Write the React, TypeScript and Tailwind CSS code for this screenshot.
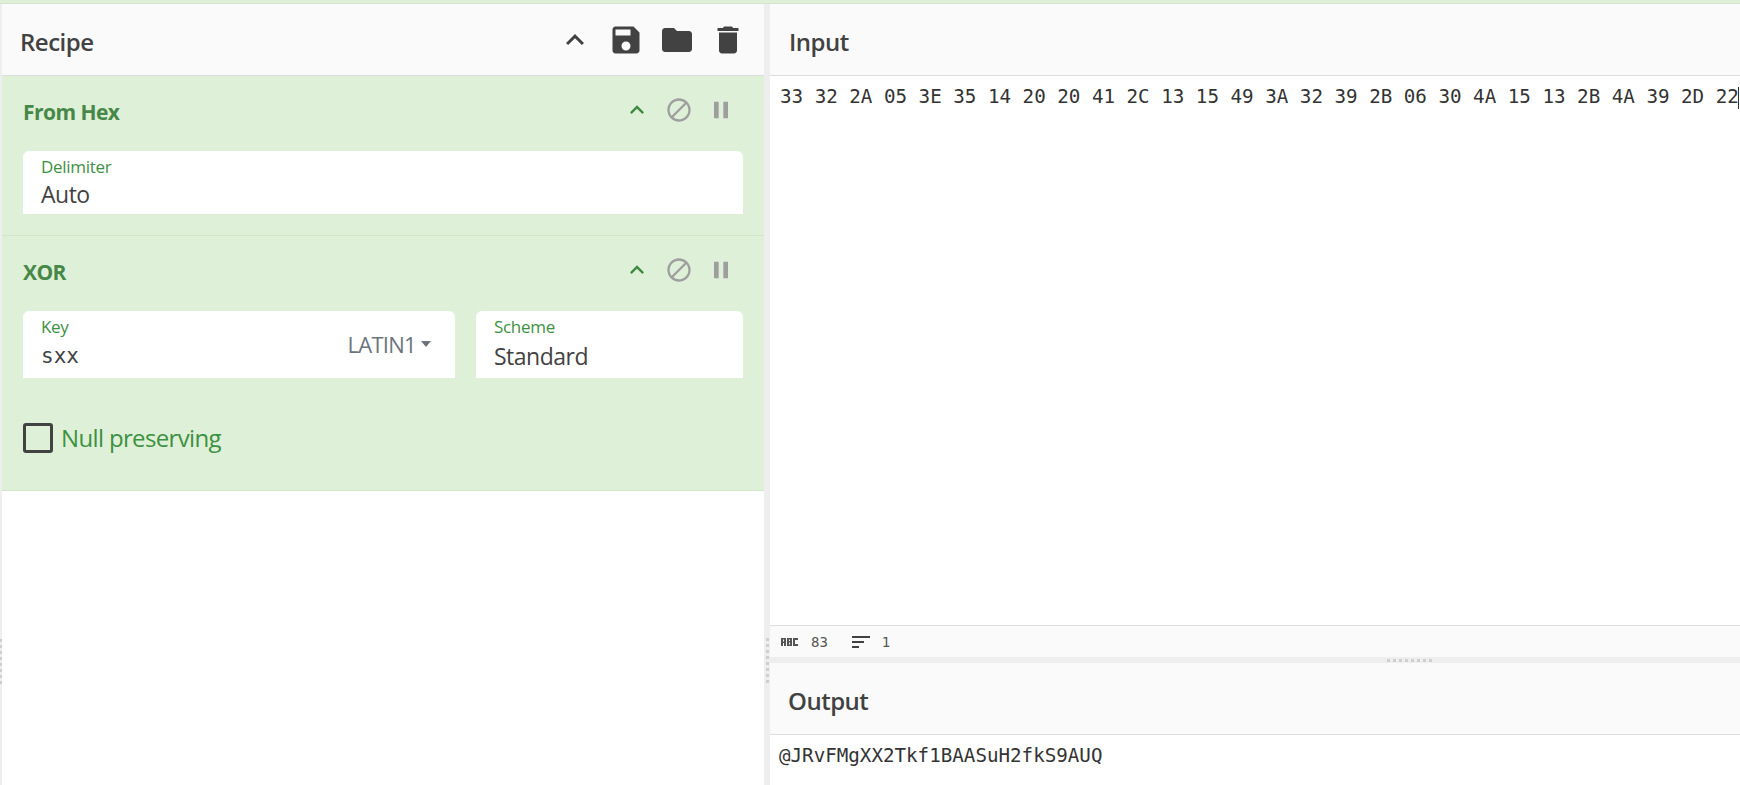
const ui = "font-['Open_Sans',sans-serif]"
const mono = "font-['DejaVu_Sans_Mono',monospace]"

function Icon({ d, size, className }: { d: string; size: number; className?: string }) {
  return (
    <svg width={size} height={size} viewBox="0 0 24 24" fill="currentColor" className={className}>
      <path d={d} />
    </svg>
  )
}

const icons = {
  up: 'M12 8l-6 6 1.41 1.41L12 10.83l4.59 4.58L18 14z',
  save: 'M17 3H5c-1.11 0-2 .9-2 2v14c0 1.1.89 2 2 2h14c1.1 0 2-.9 2-2V7l-4-4zm-5 16c-1.66 0-3-1.34-3-3s1.34-3 3-3 3 1.34 3 3-1.34 3-3 3zm3-10H5V5h10v4z',
  folder: 'M10 4H4c-1.1 0-1.99.9-1.99 2L2 18c0 1.1.9 2 2 2h16c1.1 0 2-.9 2-2V8c0-1.1-.9-2-2-2h-8l-2-2z',
  trash: 'M6 19c0 1.1.9 2 2 2h8c1.1 0 2-.9 2-2V7H6v12zM19 4h-3.5l-1-1h-5l-1 1H5v2h14V4z',
  block: 'M12 2C6.48 2 2 6.48 2 12s4.48 10 10 10 10-4.48 10-10S17.52 2 12 2zM4 12c0-4.42 3.58-8 8-8 1.85 0 3.55.63 4.9 1.69L5.69 16.9C4.63 15.55 4 13.85 4 12zm8 8c-1.85 0-3.55-.63-4.9-1.69L18.31 7.1C19.37 8.45 20 10.15 20 12c0 4.42-3.58 8-8 8z',
  pause: 'M6 19h4V5H6v14zm8-14v14h4V5h-4z',
}

function Dots({ className }: { className: string }) {
  return (
    <div className={className}>
      {Array.from({ length: 8 }).map((_, i) => (
        <span key={i} className="h-[3px] w-[3px] shrink-0 bg-[#cfcfcf]" />
      ))}
    </div>
  )
}

function OpHeader({ title }: { title: string }) {
  return (
    <div className="flex h-[28px] items-center justify-between pr-[8px]">
      <h3 className={`pt-[5px] text-[21px] font-bold tracking-[-0.55px] text-[#468847] ${ui}`}>{title}</h3>
      <div className="flex items-center gap-[14px] text-[#9e9e9e]">
        <Icon d={icons.up} size={28} className="text-[#3e8a42]" />
        <Icon d={icons.block} size={28} />
        <Icon d={icons.pause} size={28} />
      </div>
    </div>
  )
}

function Field({ label, value, width, valueClass }: { label: string; value: string; width: string; valueClass: string }) {
  return (
    <div className={`relative rounded-t-[6px] bg-white px-[18px] ${width}`}>
      <div className={`pt-[6px] text-[17px] leading-[20px] tracking-[-0.3px] text-[#3d9142] ${ui}`}>{label}</div>
      <div className={`leading-[30px] text-[#424242] ${valueClass}`}>{value}</div>
    </div>
  )
}

function PaneHeader({ title, className }: { title: string; className: string }) {
  return (
    <div className={`flex h-[72px] items-center border-b border-[#dddddd] bg-[#fafafa] pt-[4px] text-[24px] font-semibold tracking-[-0.5px] text-[#424242] ${ui} ${className}`}>
      {title}
    </div>
  )
}

export default function App() {
  return (
    <div className="flex h-[785px] w-[1740px] flex-col overflow-hidden bg-white">
      <div className="h-[4px] shrink-0 border-b border-[#d3e6ca] bg-[#dff0d8]" />
      <div className="flex min-h-0 flex-1">
        <Dots className="flex w-[2px] shrink-0 flex-col items-center gap-[3px] overflow-hidden bg-[#eeeeee] pt-[635px]" />

        {/* recipe */}
        <div className="flex w-[762px] shrink-0 flex-col">
          <div className={`flex h-[72px] items-center justify-between border-b border-[#dddddd] bg-[#fafafa] pl-[18px] pr-[18px] ${ui}`}>
            <h2 className="pt-[4px] text-[24px] font-semibold tracking-[-0.5px] text-[#424242]">Recipe</h2>
            <div className="flex items-center gap-[15px] text-[#424242]">
              <Icon d={icons.up} size={36} />
              <Icon d={icons.save} size={36} />
              <Icon d={icons.folder} size={36} />
              <Icon d={icons.trash} size={36} />
            </div>
          </div>

          <section className="h-[160px] border-b border-[#d3e6ca] bg-[#dff0d8] px-[21px] pt-[20px]">
            <OpHeader title="From Hex" />
            <div className="mt-[27px]">
              <Field
                label="Delimiter"
                value="Auto"
                width="w-full h-[63px]"
                valueClass={`pt-[2px] text-[23px] tracking-[-0.5px] ${ui}`}
              />
            </div>
          </section>

          <section className="h-[255px] border-b border-[#d3e6ca] bg-[#dff0d8] px-[21px] pt-[20px]">
            <OpHeader title="XOR" />
            <div className="mt-[27px] flex gap-[21px]">
              <div className="relative h-[67px] w-[432px]">
                <Field label="Key" value="sxx" width="h-full w-full" valueClass={`pt-[4px] text-[21px] ${mono}`} />
                <div className={`absolute right-[24px] top-[19px] flex items-center gap-[5px] text-[22px] leading-[28px] tracking-[-0.7px] text-[#6c757d] ${ui}`}>
                  LATIN1
                  <span className="h-0 w-0 border-x-[5.5px] border-t-[6px] border-x-transparent border-t-[#6c757d]" />
                </div>
              </div>
              <Field
                label="Scheme"
                value="Standard"
                width="h-[67px] w-[267px]"
                valueClass={`pt-[4px] text-[23px] tracking-[-0.5px] ${ui}`}
              />
            </div>
            <label className={`mt-[42px] flex items-center gap-[8px] text-[24px] tracking-[-0.65px] text-[#3d9142] ${ui}`}>
              <span className="h-[30px] w-[30px] rounded-[3px] border-[3px] border-[#424242]" />
              Null preserving
            </label>
          </section>
        </div>

        {/* gutter */}
        <Dots className="flex w-[6px] shrink-0 flex-col items-center gap-[3px] bg-[#eeeeee] pt-[634px]" />

        {/* input / output */}
        <div className="flex min-w-0 flex-1 flex-col">
          <PaneHeader title="Input" className="pl-[19px]" />
          <div className={`h-[550px] border-b border-[#dddddd] pl-[10px] pt-[8px] text-[19.2px] leading-[26px] whitespace-pre text-[#333333] ${mono}`}>
            33 32 2A 05 3E 35 14 20 20 41 2C 13 15 49 3A 32 39 2B 06 30 4A 15 13 2B 4A 39 2D 22
            <span className="ml-[-1px] inline-block h-[22px] w-px bg-[#333333] align-middle" />
          </div>
          <div className={`flex h-[31px] items-center bg-[#fafafa] pl-[10px] pt-[1px] text-[14px] text-[#555555] ${mono}`}>
            <svg width="20" height="10" viewBox="0 0 20 10" fill="#555555">
              <path d="M1 1h5v8H4V6H3v3H1zm2 1.500v2h1v-2zM7 1h5v8H7zm2 1.500v1.500h1V2.500zm0 3v2h1v-2zM13 1h5v2h-3v4h3v2h-5z" fillRule="evenodd" />
            </svg>
            <span className="ml-[11px]">83</span>
            <svg width="18" height="14" viewBox="0 0 18 14" className="ml-[24px]" fill="#424242">
              <rect x="0" y="1" width="18" height="2" />
              <rect x="0" y="6" width="12" height="2" />
              <rect x="0" y="11" width="7" height="2" />
            </svg>
            <span className="ml-[12px]">1</span>
          </div>
          <div className="h-[6px] shrink-0 bg-[#eeeeee] pl-[617px] pt-[1.5px]">
            <Dots className="flex gap-[3px]" />
          </div>
          <PaneHeader title="Output" className="pl-[18px]" />
          <div className={`flex-1 pl-[9px] pt-[8px] text-[19.2px] leading-[26px] text-[#333333] ${mono}`}>
            @JRvFMgXX2Tkf1BAASuH2fkS9AUQ
          </div>
        </div>
      </div>
    </div>
  )
}
